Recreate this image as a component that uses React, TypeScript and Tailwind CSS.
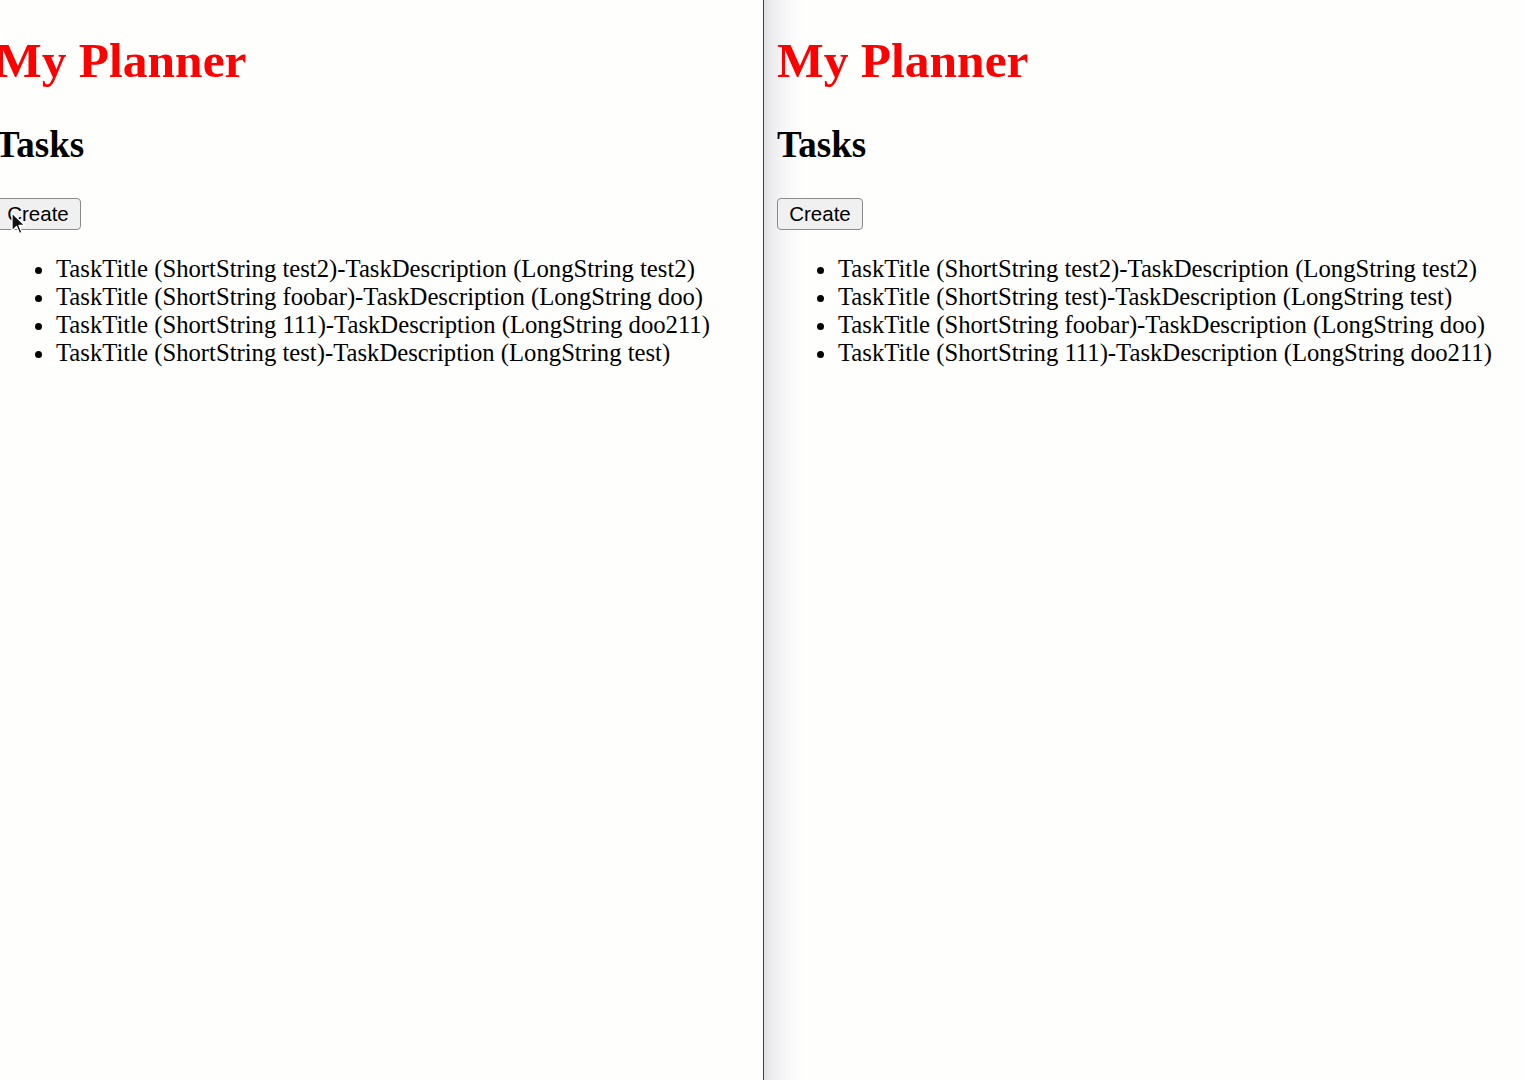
import React from 'react';

const tasksLeft = [
  ['test2', 'test2'],
  ['foobar', 'doo'],
  ['111', 'doo211'],
  ['test', 'test'],
];

const tasksRight = [
  ['test2', 'test2'],
  ['test', 'test'],
  ['foobar', 'doo'],
  ['111', 'doo211'],
];

const serif = "font-['Liberation_Serif','Times_New_Roman',serif]";

const PlannerPage = ({ tasks, showCursor }: { tasks: string[][]; showCursor?: boolean }) => {
  return (
    <div className={`${serif} text-black`}>
      <h1 className="pt-[33px] text-[49.5px] leading-[56px] font-bold text-[#ff0000] whitespace-nowrap">
        My Planner
      </h1>
      <h2 className="mt-[35px] text-[37px] leading-[42px] font-bold whitespace-nowrap">Tasks</h2>
      <div className="relative mt-[32px] h-[32px]">
        <button
          type="button"
          className="h-[32px] w-[86px] rounded-[4px] border border-[#8a8a8a] bg-[#f0f0f0] font-['Liberation_Sans',Arial,sans-serif] text-[20.5px] leading-[30px] text-black"
        >
          Create
        </button>
        {showCursor && (
          <svg
            className="absolute left-[16px] top-[14px]"
            width="16"
            height="24"
            viewBox="0 0 16 24"
          >
            <path
              d="M1 1 L1 19 L5.5 14.5 L8.5 21.5 L11 20.4 L8 13.5 L14 13.5 Z"
              fill="#111"
              stroke="#fff"
              strokeWidth="1.3"
              strokeLinejoin="round"
            />
          </svg>
        )}
      </div>
      <ul className="mt-[25px] list-disc pl-[61px] text-[24.7px] leading-[28px] whitespace-nowrap">
        {tasks.map(([t, d], i) => (
          <li key={i}>
            TaskTitle (ShortString {t})-TaskDescription (LongString {d})
          </li>
        ))}
      </ul>
    </div>
  );
};

export default function App() {
  return (
    <div className="flex h-[1080px] w-[1524px] overflow-hidden bg-[#fefefd]">
      <div className="h-full w-[763px] shrink-0 overflow-hidden">
        <div className="ml-[-5px]">
          <PlannerPage tasks={tasksLeft} showCursor />
        </div>
      </div>
      <div className="h-full w-[1px] shrink-0 bg-[#39404a]" />
      <div className="h-full flex-1 overflow-hidden bg-[linear-gradient(to_right,#e2e2e4_0px,#ececee_8px,#f6f6f8_20px,#fcfcfd_32px,#fefefd_40px)] pl-[13px]">
        <PlannerPage tasks={tasksRight} />
      </div>
    </div>
  );
}
